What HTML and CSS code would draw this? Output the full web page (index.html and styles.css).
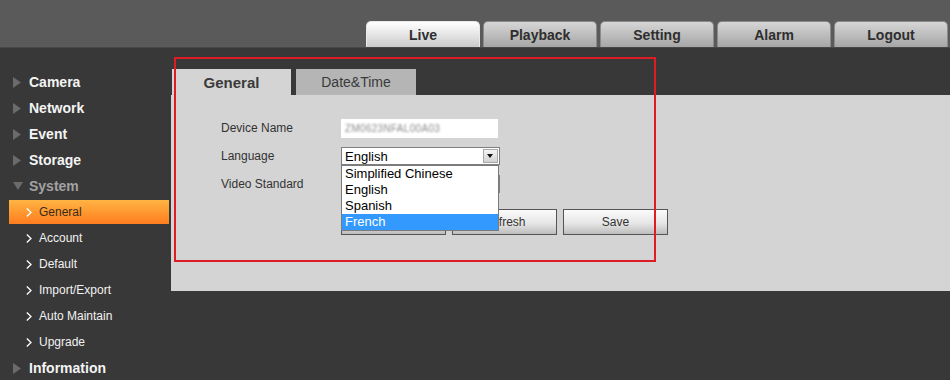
FILE: index.html
```html
<!DOCTYPE html>
<html lang="en">
<head>
  <meta charset="UTF-8" />
  <title>Web Service - Setting</title>
  <link rel="stylesheet" href="styles.css">
</head>
<body>
  <div class="header">
    <nav class="top-tabs">
      <a class="top-tab active">Live</a>
      <a class="top-tab">Playback</a>
      <a class="top-tab">Setting</a>
      <a class="top-tab">Alarm</a>
      <a class="top-tab">Logout</a>
    </nav>
  </div>

  <div class="main">
    <aside class="sidebar">
      <div class="menu-item"><svg class="tri" viewBox="0 0 8 11"><polygon points="0,0 8,5.5 0,11"/></svg>Camera</div>
      <div class="menu-item"><svg class="tri" viewBox="0 0 8 11"><polygon points="0,0 8,5.5 0,11"/></svg>Network</div>
      <div class="menu-item"><svg class="tri" viewBox="0 0 8 11"><polygon points="0,0 8,5.5 0,11"/></svg>Event</div>
      <div class="menu-item"><svg class="tri" viewBox="0 0 8 11"><polygon points="0,0 8,5.5 0,11"/></svg>Storage</div>
      <div class="menu-item open"><svg class="tri-down" viewBox="0 0 10 8"><polygon points="0,0 10,0 5,8"/></svg>System</div>
      <div class="sub-item active"><span class="sub-inner"><svg class="chev" viewBox="0 0 6 9"><polyline points="0.8,0.5 5,4.5 0.8,8.5"/></svg>General</span></div>
      <div class="sub-item"><span class="sub-inner"><svg class="chev" viewBox="0 0 6 9"><polyline points="0.8,0.5 5,4.5 0.8,8.5"/></svg>Account</span></div>
      <div class="sub-item"><span class="sub-inner"><svg class="chev" viewBox="0 0 6 9"><polyline points="0.8,0.5 5,4.5 0.8,8.5"/></svg>Default</span></div>
      <div class="sub-item"><span class="sub-inner"><svg class="chev" viewBox="0 0 6 9"><polyline points="0.8,0.5 5,4.5 0.8,8.5"/></svg>Import/Export</span></div>
      <div class="sub-item"><span class="sub-inner"><svg class="chev" viewBox="0 0 6 9"><polyline points="0.8,0.5 5,4.5 0.8,8.5"/></svg>Auto Maintain</span></div>
      <div class="sub-item"><span class="sub-inner"><svg class="chev" viewBox="0 0 6 9"><polyline points="0.8,0.5 5,4.5 0.8,8.5"/></svg>Upgrade</span></div>
      <div class="menu-item"><svg class="tri" viewBox="0 0 8 11"><polygon points="0,0 8,5.5 0,11"/></svg>Information</div>
    </aside>

    <section class="content">
      <div class="panel-tabs">
        <div class="panel-tab active">General</div>
        <div class="panel-tab">Date&amp;Time</div>
      </div>
      <div class="panel">
        <div class="form-row">
          <label>Device Name</label>
          <div class="text-input"><span class="blurred">ZM0623NFAL00A03</span></div>
        </div>
        <div class="form-row">
          <label>Language</label>
          <div class="select">
            <span class="value">English</span>
            <span class="arrow"></span>
            <ul class="dropdown">
              <li>Simplified Chinese</li>
              <li>English</li>
              <li>Spanish</li>
              <li class="selected">French</li>
            </ul>
          </div>
        </div>
        <div class="form-row">
          <label>Video Standard</label>
          <div class="select">
            <span class="value"></span>
            <span class="arrow"></span>
          </div>
        </div>
        <div class="buttons">
          <button aria-label="Default"></button>
          <button>Refresh</button>
          <button>Save</button>
        </div>
      </div>
    </section>
  </div>

  <div class="annotation"></div>
</body>
</html>
```

FILE: styles.css
```css
* {
  margin: 0;
  padding: 0;
  box-sizing: border-box;
}

body {
  width: 950px;
  height: 380px;
  overflow: hidden;
  background: #383838;
  font-family: 'Liberation Sans', Arial, sans-serif;
  position: relative;
}

.header {
  height: 48px;
  background: #5a5a5a;
  border-bottom: 1px solid #474747;
  display: flex;
  justify-content: flex-end;
  align-items: flex-end;
  padding-right: 2px;
}

.top-tabs {
  display: flex;
  gap: 3px;
}

.top-tab {
  width: 114px;
  height: 26px;
  display: flex;
  align-items: center;
  justify-content: center;
  border-radius: 5px 5px 0 0;
  border: 1px solid #8a8a8a;
  border-bottom: none;
  background: linear-gradient(#d6d6d6, #a6a6a6);
  color: #2e2e2e;
  font-size: 14px;
  font-weight: bold;
}

.top-tab.active {
  border-color: #e8e8e8;
  background: linear-gradient(#ffffff, #cbcbcb);
}

.main {
  display: flex;
  height: 332px;
}

.sidebar {
  width: 171px;
  padding-top: 21px;
}

.menu-item {
  height: 26px;
  display: flex;
  align-items: center;
  padding-left: 13px;
  color: #f4f4f4;
  font-size: 14px;
  font-weight: bold;
}

.menu-item.open {
  color: #a2a2a2;
}

.tri {
  width: 8px;
  height: 11px;
  margin-right: 8px;
  fill: #6b6b6b;
}

.tri-down {
  width: 10px;
  height: 8px;
  margin-right: 6px;
  fill: #6b6b6b;
}

.sub-item {
  height: 26px;
  display: flex;
  align-items: center;
}

.sub-inner {
  margin-left: 9px;
  width: 160px;
  height: 24px;
  display: flex;
  align-items: center;
  padding-left: 17px;
  color: #f2f2f2;
  font-size: 12px;
}

.sub-item.active .sub-inner {
  background: linear-gradient(#ffb443, #ff7d1e);
  color: #3a2a1a;
}

.chev {
  width: 6px;
  height: 9px;
  margin-right: 7px;
  fill: none;
  stroke: #ffffff;
  stroke-width: 1.3;
}

.content {
  flex: 1;
  padding-top: 21px;
}

.panel-tabs {
  display: flex;
  gap: 5px;
  padding-left: 1px;
  height: 26px;
}

.panel-tab {
  width: 120px;
  display: flex;
  align-items: center;
  justify-content: center;
  background: #b5b5b5;
  color: #3a3a3a;
  font-size: 14px;
}

.panel-tab.active {
  width: 119px;
  background: #d4d4d4;
  font-size: 15px;
  font-weight: bold;
}

.panel {
  height: 196px;
  background: #d4d4d4;
  padding: 19px 0 0 50px;
}

.form-row {
  height: 28px;
  display: flex;
  align-items: center;
}

.form-row label {
  width: 120px;
  font-size: 12px;
  color: #333;
}

.text-input {
  width: 157px;
  height: 19px;
  background: #fff;
  display: flex;
  align-items: center;
  padding-left: 4px;
  overflow: hidden;
}

.blurred {
  font-size: 10px;
  color: #8a8a8a;
  filter: blur(1.3px);
  letter-spacing: 0.3px;
}

.select {
  position: relative;
  width: 159px;
  height: 18px;
  background: #fff;
  border: 1px solid #7f7f7f;
  display: flex;
  align-items: center;
  padding-left: 3px;
  font-size: 13px;
  color: #000;
}

.select .value {
  flex: 1;
}

.arrow {
  width: 15px;
  height: 14px;
  margin-right: 1px;
  border: 1px solid #a8a8a8;
  background: linear-gradient(#f4f4f4, #d2d2d2);
  position: relative;
}

.arrow::after {
  content: '';
  position: absolute;
  left: 3px;
  top: 4px;
  border-left: 3.5px solid transparent;
  border-right: 3.5px solid transparent;
  border-top: 4px solid #111;
}

.dropdown {
  position: absolute;
  left: -1px;
  top: 17px;
  width: 158px;
  list-style: none;
  background: #fff;
  border: 1px solid #7a7a7a;
  z-index: 2;
}

.dropdown li {
  height: 16px;
  line-height: 16px;
  padding-left: 3px;
  font-size: 13px;
}

.dropdown li.selected {
  background: #3399ff;
  color: #fff;
}

.buttons {
  display: flex;
  gap: 6px;
  margin-top: 11px;
  padding-left: 120px;
}

.buttons button {
  width: 105px;
  height: 26px;
  border: 1px solid #555;
  background: linear-gradient(#fbfbfb, #e6e6e6 55%, #bdbdbd);
  font-family: 'Liberation Sans', Arial, sans-serif;
  font-size: 12px;
  color: #333;
}

.annotation {
  position: absolute;
  left: 174px;
  top: 57px;
  width: 482px;
  height: 205px;
  border: 2px solid #dd1c24;
  pointer-events: none;
}
```
